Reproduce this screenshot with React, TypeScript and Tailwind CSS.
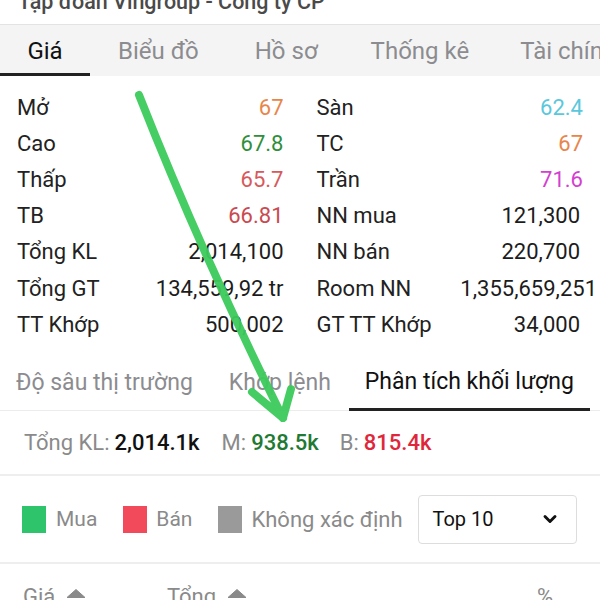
import { ChevronDown } from "lucide-react";

const left = [
    { label: "Mở", value: "67", color: "text-[#e8864a]" },
    { label: "Cao", value: "67.8", color: "text-[#2f8f3a]" },
    { label: "Thấp", value: "65.7", color: "text-[#d65a5c]" },
    { label: "TB", value: "66.81", color: "text-[#c94a50]" },
    { label: "Tổng KL", value: "2,014,100", color: "text-[#1c1c1c]" },
    { label: "Tổng GT", value: "134,559,92 tr", color: "text-[#1c1c1c]" },
    { label: "TT Khớp", value: "500,002", color: "text-[#1c1c1c]" },
];

const right = [
    { label: "Sàn", value: "62.4", color: "text-[#5ac8dc]" },
    { label: "TC", value: "67", color: "text-[#e8864a]" },
    { label: "Trần", value: "71.6", color: "text-[#d33fd0]" },
    { label: "NN mua", value: "121,300", color: "text-[#1c1c1c] pr-[3px]" },
    { label: "NN bán", value: "220,700", color: "text-[#1c1c1c] pr-[3px]" },
    { label: "Room NN", value: "1,355,659,251", color: "text-[#1c1c1c] -mr-[14px]" },
    { label: "GT TT Khớp", value: "34,000", color: "text-[#1c1c1c] pr-[3px]" },
];

function Row({ label, value, color }: { label: string; value: string; color: string }) {
    return (
        <div className="flex h-[36.2px] items-center justify-between whitespace-nowrap">
            <span className="text-[#222]">{label}</span>
            <span className={color}>{value}</span>
        </div>
    );
}

function Caret() {
    return (
        <svg width="20" height="9" viewBox="0 0 20 9" className="-mt-[5px] ml-[11px]">
            <path d="M1 8.5 L10 0.5 L19 8.5 Z" fill="#8a8a8a" strokeLinejoin="round" stroke="#8a8a8a" strokeWidth="1" />
        </svg>
    );
}

export default function App() {
    return (
        <div className="relative h-[600px] w-[600px] overflow-hidden bg-white font-['Roboto',sans-serif]">
            {/* company name, cut at the top */}
            <div className="h-[24px] overflow-hidden px-[18px]">
                <div className="-mt-[14px] whitespace-nowrap text-[21.5px] font-medium text-[#4a4a4a]">
                    Tập đoàn Vingroup - Công ty CP
                </div>
            </div>

            {/* main tabs */}
            <div className="flex h-[52px] items-stretch overflow-hidden whitespace-nowrap border-t border-[#e3e3e3] bg-[#f4f4f4] text-[24px] text-[#8c8c90]">
                <div className="flex w-[90px] shrink-0 items-center justify-center border-b-[3px] border-[#222] pt-[3px] text-[#111]">Giá</div>
                <div className="ml-[28px] flex shrink-0 items-center">Biểu đồ</div>
                <div className="ml-[56px] flex shrink-0 items-center">Hồ sơ</div>
                <div className="ml-[53px] flex shrink-0 items-center">Thống kê</div>
                <div className="ml-[51px] flex shrink-0 items-center">Tài chính</div>
            </div>

            {/* quote table */}
            <div className="grid grid-cols-2 gap-x-[33px] px-[17px] pt-[13px] text-[22px]">
                <div>
                    {left.map((r) => (
                        <Row key={r.label} {...r} />
                    ))}
                </div>
                <div>
                    {right.map((r) => (
                        <Row key={r.label} {...r} />
                    ))}
                </div>
            </div>

            {/* sub tabs */}
            <div className="mt-[13px] flex h-[56px] items-stretch whitespace-nowrap border-b border-[#ececec] text-[23px] text-[#8c8c90]">
                <div className="flex shrink-0 items-center pl-[16px]">Độ sâu thị trường</div>
                <div className="ml-[36px] flex shrink-0 items-center">Khớp lệnh</div>
                <div className="-mb-px ml-[18px] flex w-[241px] shrink-0 items-center justify-center border-b-[3px] border-[#222] text-[#111]">
                    Phân tích khối lượng
                </div>
            </div>

            {/* totals */}
            <div className="flex h-[63px] items-center whitespace-nowrap px-[24px] text-[22px] text-[#8a8a8a]">
                <span>Tổng KL: </span>
                <span className="ml-[5px] font-medium text-[#111]">2,014.1k</span>
                <span className="ml-[22px]">M: </span>
                <span className="ml-[5px] font-medium text-[#1f7a33]">938.5k</span>
                <span className="ml-[21px]">B: </span>
                <span className="ml-[5px] font-medium text-[#e0263a]">815.4k</span>
            </div>

            <div className="h-[2px] bg-[#eeeeee]" />

            {/* legend + top select */}
            <div className="flex h-[86px] items-center whitespace-nowrap pl-[22px] text-[21px] text-[#8a8a8a]">
                <span className="h-[27px] w-[24px] shrink-0 bg-[#2ec46b]" />
                <span className="ml-[10px]">Mua</span>
                <span className="ml-[26px] h-[27px] w-[24px] shrink-0 bg-[#f2495b]" />
                <span className="ml-[9px]">Bán</span>
                <span className="ml-[26px] h-[27px] w-[24px] shrink-0 bg-[#9a9a9a]" />
                <span className="ml-[9px] text-[22px]">Không xác định</span>
                <div className="ml-[15px] flex h-[49px] w-[159px] shrink-0 items-center justify-between rounded-[4px] border border-[#dddddd] pl-[14px] pr-[16px] text-[20px] text-[#111]">
                    <span>Top 10</span>
                    <ChevronDown size={20} strokeWidth={3.5} color="#111" />
                </div>
            </div>

            <div className="h-[2px] bg-[#eeeeee]" />

            {/* column header */}
            <div className="flex h-[60px] items-center whitespace-nowrap pt-[4px] text-[22px] text-[#8a8a8a]">
                <div className="flex w-[167px] shrink-0 items-center pl-[23px]">
                    Giá
                    <Caret />
                </div>
                <div className="flex items-center">
                    Tổng
                    <Caret />
                </div>
                <div className="ml-auto pr-[47px]">%</div>
            </div>

            {/* hand drawn arrow */}
            <svg className="pointer-events-none absolute inset-0" width="600" height="600" viewBox="0 0 600 600">
                <g fill="none" stroke="#3ccb5c" strokeWidth="8" strokeLinecap="round" strokeLinejoin="round" opacity="0.95">
                    <path d="M139 95 Q 200 250 283 418" />
                    <path d="M252 392 L 283 418 L 291 389" />
                    <path d="M258 397 L 280 413" strokeWidth="6" />
                </g>
            </svg>
        </div>
    );
}
